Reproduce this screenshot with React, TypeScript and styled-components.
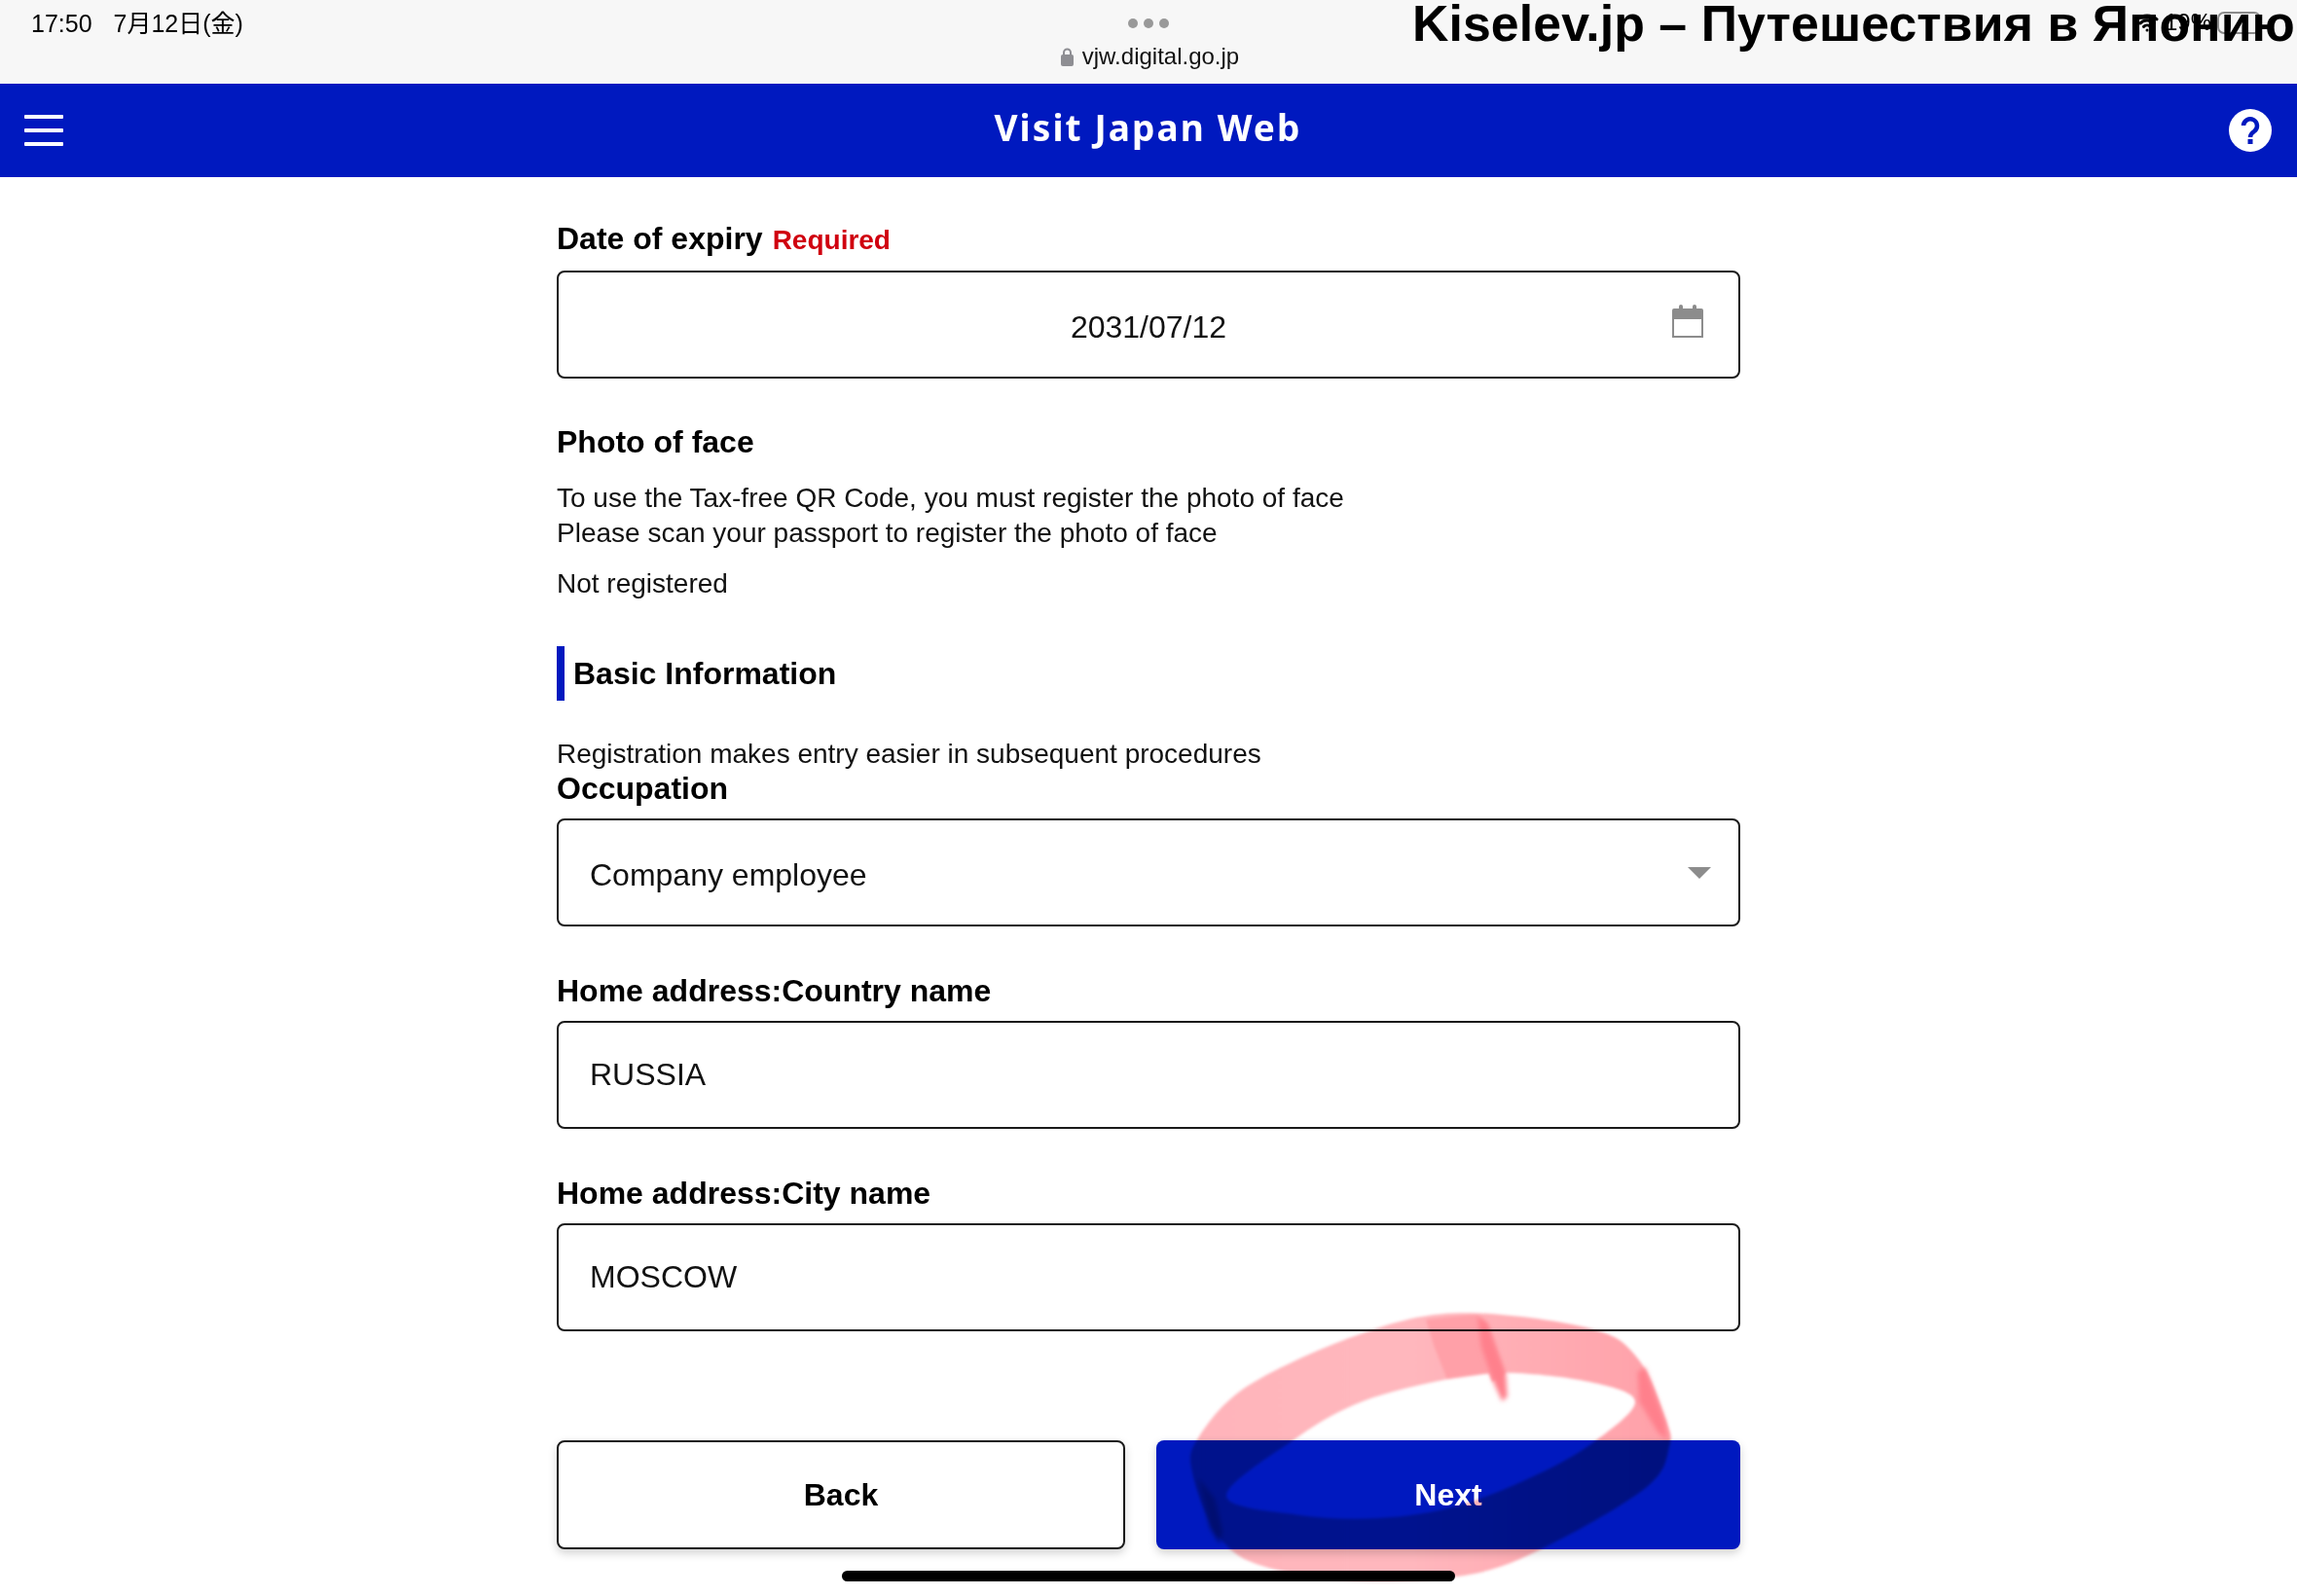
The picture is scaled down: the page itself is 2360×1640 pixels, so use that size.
import React, { FC } from "react";
import styled, { createGlobalStyle } from "styled-components";
import { Wifi } from "lucide-react";

const blue = "#0019bf";
const sans = `"Liberation Sans", "Noto Sans CJK JP", sans-serif`;

const GlobalStyle = createGlobalStyle`
  html, body {
    margin: 0;
    padding: 0;
    background: #fff;
    font-family: ${sans};
    color: #000;
  }
`;

const Page = styled.div`
  position: relative;
  width: 2360px;
  height: 1640px;
  overflow: hidden;
  background: #fff;
`;

const StatusBar = styled.div`
  height: 86px;
  background: #f7f7f7;
  display: grid;
  grid-template-columns: 1fr auto 1fr;
  padding: 0 32px;
  box-sizing: border-box;
`;

const Clock = styled.div`
  display: flex;
  gap: 22px;
  font-size: 25px;
  line-height: 28px;
  padding-top: 10px;
`;

const UrlColumn = styled.div`
  display: flex;
  flex-direction: column;
  align-items: center;
  padding-top: 19px;
`;

const Dots = styled.div`
  display: flex;
  gap: 6px;
`;

const Dot = styled.span`
  width: 10px;
  height: 10px;
  border-radius: 50%;
  background: #999;
`;

const Url = styled.div`
  display: flex;
  align-items: center;
  gap: 9px;
  margin-top: 15px;
  padding-left: 3px;
  font-size: 24px;
  line-height: 28px;
  color: #111;
`;

const Watermark = styled.div`
  position: absolute;
  left: 1451px;
  top: -6px;
  font-size: 51.800px;
  letter-spacing: 0.090px;
  line-height: 60px;
  font-weight: 700;
  white-space: nowrap;
  color: #000;
`;

const DeviceStatus = styled.div`
  display: flex;
  justify-content: flex-end;
  align-items: center;
  gap: 6px;
  height: 46px;
  font-size: 24px;
  padding-right: 5px;
`;

const Battery = styled.span`
  box-sizing: border-box;
  width: 45px;
  height: 23px;
  border: 2px solid #8a8a8a;
  border-radius: 7px;
`;

const Header = styled.header`
  height: 96px;
  background: ${blue};
  display: grid;
  grid-template-columns: 1fr auto 1fr;
  align-items: center;
  padding: 0 26px 0 25px;
`;

const MenuButton = styled.div`
  display: flex;
  flex-direction: column;
  gap: 10px;
  width: 40px;
`;

const MenuLine = styled.span`
  height: 4px;
  background: #fff;
  border-radius: 1px;
`;

const Title = styled.h1`
  margin: 0 0 6px;
  font-family: "Noto Sans", "Open Sans", sans-serif;
  font-size: 37px;
  line-height: 48px;
  font-weight: 700;
  letter-spacing: 2.100px;
  color: #fff;
`;

const HelpButton = styled.div`
  justify-self: end;
  display: flex;
`;

const Main = styled.main`
  width: 1216px;
  margin-left: 572px;
  padding-top: 43px;
  display: flex;
  flex-direction: column;
`;

const Label = styled.div<{ $top?: number; $tight?: boolean }>`
  margin-top: ${(p) => p.$top ?? 0}px;
  margin-bottom: ${(p) => (p.$tight ? 14 : 11)}px;
  font-size: 32px;
  line-height: ${(p) => (p.$tight ? 34 : 40)}px;
  font-weight: 700;
`;

const Required = styled.span`
  margin-left: 10px;
  font-size: 28px;
  color: #d0000f;
`;

const FieldBox = styled.div<{ $center?: boolean; $low?: boolean }>`
  position: relative;
  box-sizing: border-box;
  height: 111px;
  border: 2px solid #1a1a1a;
  border-radius: 8px;
  padding: ${(p) => (p.$low ? 5 : 0)}px 32px 0;
  display: flex;
  align-items: center;
  justify-content: ${(p) => (p.$center ? "center" : "flex-start")};
  font-size: 32px;
  color: #111;
`;

const CalendarSlot = styled.span`
  position: absolute;
  right: 36px;
  top: 33px;
  display: flex;
`;

const Caret = styled.span`
  position: absolute;
  right: 28px;
  top: 48px;
  width: 0;
  height: 0;
  border-left: 12px solid transparent;
  border-right: 12px solid transparent;
  border-top: 12px solid #8c8c8c;
`;

const SubHeading = styled(Label)`
  margin-bottom: 20px;
`;

const BodyText = styled.p<{ $top?: number }>`
  margin: ${(p) => p.$top ?? 0}px 0 0;
  font-size: 28px;
  line-height: 36px;
  color: #111;
`;

const SectionTitle = styled.h2`
  margin: 46px 0 0;
  height: 56px;
  border-left: 8px solid ${blue};
  padding-left: 9px;
  display: flex;
  align-items: center;
  font-size: 32px;
  font-weight: 700;
`;

const Intro = styled.p`
  margin: 37px 0 0;
  font-size: 28px;
  line-height: 36px;
  color: #111;
`;

const ButtonRow = styled.div`
  margin-top: 112px;
  display: grid;
  grid-template-columns: 584px 600px;
  gap: 32px;
`;

const ActionButton = styled.button<{ $primary?: boolean }>`
  box-sizing: border-box;
  height: 112px;
  padding: 0;
  border: ${(p) => (p.$primary ? "0" : "2px solid #1a1a1a")};
  border-radius: 8px;
  background: ${(p) => (p.$primary ? blue : "#fff")};
  color: ${(p) => (p.$primary ? "#fff" : "#000")};
  font-family: ${sans};
  font-size: 32px;
  font-weight: 700;
  box-shadow: 0 4px 10px rgba(0, 0, 0, 0.18);
`;

const HomeIndicator = styled.div`
  position: absolute;
  left: 865px;
  top: 1614px;
  width: 630px;
  height: 11px;
  border-radius: 6px;
  background: #000;
`;

const Scribble = styled.svg`
  position: absolute;
  left: 1200px;
  top: 1340px;
  width: 520px;
  height: 290px;
  mix-blend-mode: multiply;
  pointer-events: none;
`;

const CalendarIcon: FC = () => (
  <svg width="32" height="34" viewBox="0 0 32 34">
    <rect x="7" y="0" width="4" height="8" rx="2" fill="#8c8c8c" />
    <rect x="21" y="0" width="4" height="8" rx="2" fill="#8c8c8c" />
    <path d="M2 4h28a2 2 0 0 1 2 2v15H0V6a2 2 0 0 1 2-2z" fill="#8c8c8c" />
    <rect x="1" y="14" width="30" height="19" fill="#fff" stroke="#8c8c8c" strokeWidth="2" />
  </svg>
);

const LockIcon: FC = () => (
  <svg width="13" height="19" viewBox="0 0 13 19">
    <path d="M3 8V5a3.5 3.5 0 0 1 7 0v3" fill="none" stroke="#8e8e93" strokeWidth="2" />
    <rect x="0" y="7" width="13" height="12" rx="2" fill="#8e8e93" />
  </svg>
);

const HelpIcon: FC = () => (
  <svg width="44" height="44" viewBox="0 0 44 44">
    <circle cx="22" cy="22" r="22" fill="#fff" />
    <path
      d="M15 17a7 7 0 1 1 11 6c-2.500 1.700-4 2.800-4 6"
      fill="none"
      stroke={blue}
      strokeWidth="4.500"
    />
    <rect x="19.500" y="31" width="5" height="5" fill={blue} />
  </svg>
);

// closed curve through the points, in the 3x coordinates of the viewBox
const smooth = (pts: number[][]) => {
  const n = pts.length;
  let d = `M${pts[0][0]} ${pts[0][1]}`;
  for (let i = 0; i < n; i++) {
    const [p0, p1, p2, p3] = [pts[(i - 1 + n) % n], pts[i], pts[(i + 1) % n], pts[(i + 2) % n]];
    const c1 = [p1[0] + (p2[0] - p0[0]) / 6, p1[1] + (p2[1] - p0[1]) / 6];
    const c2 = [p2[0] - (p3[0] - p1[0]) / 6, p2[1] - (p3[1] - p1[1]) / 6];
    d += `C${c1[0]} ${c1[1]} ${c2[0]} ${c2[1]} ${p2[0]} ${p2[1]}`;
  }
  return d + "Z";
};

const outerRing = [
  [900, 28], [1300, 75], [1450, 170], [1535, 360], [1545, 440], [1480, 560], [1200, 730],
  [950, 830], [600, 855], [300, 810], [160, 720], [75, 520], [95, 410], [250, 250], [600, 90],
];
const innerRing = [
  [860, 232], [600, 300], [400, 410], [180, 590], [400, 650], [650, 660], [900, 620],
  [1150, 520], [1320, 420], [1440, 300], [1300, 240], [1050, 212],
];

const PenStroke: FC = () => (
  <Scribble viewBox="0 0 1560 870">
    <defs>
      <linearGradient id="penFill" x1="0" x2="1" y1="0" y2="0">
        <stop offset="0" stopColor="#ffb4ba" />
        <stop offset="0.45" stopColor="#ffb7bd" />
        <stop offset="1" stopColor="#ffa0a8" />
      </linearGradient>
      <filter id="penBlur" x="-5%" y="-5%" width="110%" height="110%">
        <feGaussianBlur stdDeviation="4" />
      </filter>
      <filter id="seamBlur" x="-30%" y="-30%" width="160%" height="160%">
        <feGaussianBlur stdDeviation="8" />
      </filter>
    </defs>
    <g filter="url(#penBlur)">
      <path d={smooth(outerRing) + smooth(innerRing)} fill="url(#penFill)" fillRule="evenodd" />
      <path
        d="M795 48L950 32L985 60L1040 215L1000 240L990 214L860 232L820 130Z"
        fill="#ffa0a8"
      />
    </g>
    <g filter="url(#seamBlur)">
      <path d="M955 36L985 60L1042 220L1046 285L1030 300L1003 240L965 130Z" fill="#ff808c" />
      <path d="M1448 210L1470 195L1532 360L1540 420L1510 395L1452 300Z" fill="#ff808c" />
      <path d="M92 535L145 600L168 700L160 740L130 690Z" fill="#c48a96" />
    </g>
  </Scribble>
);

const App: FC = () => {
  return (
    <Page>
      <GlobalStyle />
      <StatusBar>
        <Clock>
          <span>17:50</span>
          <span>7月12日(金)</span>
        </Clock>
        <UrlColumn>
          <Dots>
            <Dot />
            <Dot />
            <Dot />
          </Dots>
          <Url>
            <LockIcon />
            vjw.digital.go.jp
          </Url>
        </UrlColumn>
        <DeviceStatus>
          <Wifi size={24} strokeWidth={3} />
          <span>19%</span>
          <Battery />
        </DeviceStatus>
      </StatusBar>
      <Watermark>Kiselev.jp – Путешествия в Японию</Watermark>

      <Header>
        <MenuButton>
          <MenuLine />
          <MenuLine />
          <MenuLine />
        </MenuButton>
        <Title>Visit Japan Web</Title>
        <HelpButton>
          <HelpIcon />
        </HelpButton>
      </Header>

      <Main>
        <Label>
          Date of expiry<Required>Required</Required>
        </Label>
        <FieldBox $center $low>
          2031/07/12
          <CalendarSlot>
            <CalendarIcon />
          </CalendarSlot>
        </FieldBox>

        <SubHeading $top={45}>Photo of face</SubHeading>
        <BodyText>
          To use the Tax-free QR Code, you must register the photo of face
          <br />
          Please scan your passport to register the photo of face
        </BodyText>
        <BodyText $top={16}>Not registered</BodyText>

        <SectionTitle>Basic Information</SectionTitle>
        <Intro>Registration makes entry easier in subsequent procedures</Intro>

        <Label $tight>Occupation</Label>
        <FieldBox $low>
          Company employee
          <Caret />
        </FieldBox>

        <Label $top={46}>Home address:Country name</Label>
        <FieldBox>RUSSIA</FieldBox>

        <Label $top={46}>Home address:City name</Label>
        <FieldBox>MOSCOW</FieldBox>

        <ButtonRow>
          <ActionButton>Back</ActionButton>
          <ActionButton $primary>Next</ActionButton>
        </ButtonRow>
      </Main>

      <HomeIndicator />
      <PenStroke />
    </Page>
  );
};

export default App;
